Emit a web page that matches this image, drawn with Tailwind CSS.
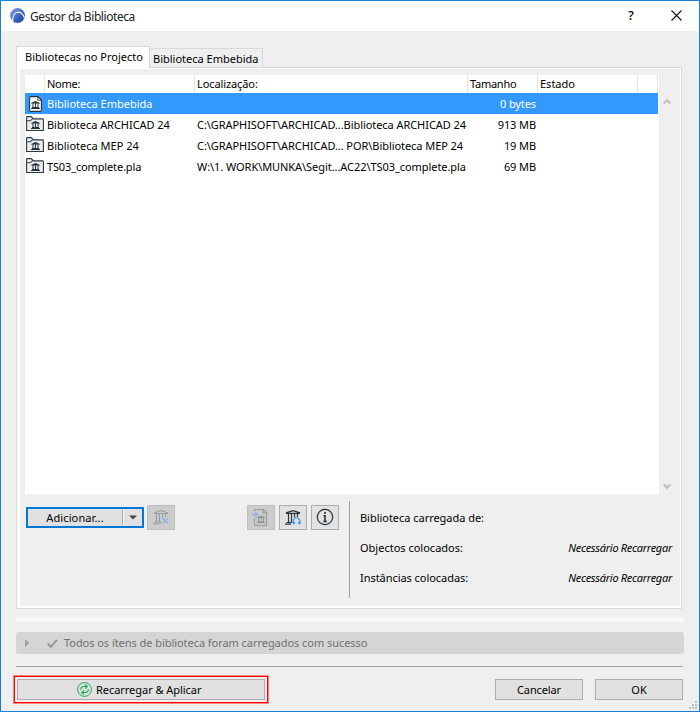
<!DOCTYPE html>
<html lang="pt">
<head>
<meta charset="utf-8">
<title>Gestor da Biblioteca</title>
<script src="https://cdn.jsdelivr.net/npm/@tailwindcss/browser@4"></script>
</head>
<body class="overflow-hidden">
<svg class="hidden">
  <symbol id="temple" viewBox="0 0 9 8"><path d="M0 2.600V2L4.500 0 9 2v.6zM1 6h7v1H1zM0 7h9v1H0zM1.500 2.500h1V6h-1zM4 2.500h1V6H4zM6.500 2.500h1V6h-1z" fill="currentColor"/></symbol>
  <symbol id="folder" viewBox="0 0 18 16"><path d="M.6 14.500V1.500Q.6.6 1.500.6h3.700l2.300 2.300h9q.9 0 .9.9v10.700zM.6 4.800h3.600l2.300-1.900" fill="#ececee" stroke="#2c3a42" stroke-width="1.100"/><use href="#temple" x="5" y="5" width="9" height="8" color="#26343c"/></symbol>
</svg>
<div class="w-[700px] h-[712px] border border-[#1a80d5] bg-[#efefef] flex flex-col font-['Noto_Sans','Open_Sans',sans-serif] text-[11px] leading-[15px] text-black whitespace-nowrap relative">
  <header class="h-[30px] shrink-0 bg-white flex items-center pl-[9px]">
    <svg class="w-[15px] h-[15px] -mt-px" viewBox="0 0 15 15"><defs><linearGradient id="lg" x1="0" y1="0" x2="1" y2="1"><stop stop-color="#8ea6e0"/><stop offset=".6" stop-color="#3560be"/><stop offset="1" stop-color="#20479f"/></linearGradient></defs><circle cx="7.500" cy="7.500" r="7.400" fill="url(#lg)"/><path d="M2.600 13.300C2.600 8 5 4.300 8.600 4.200c2.400 0 4.200 2 5.700 5.400" fill="none" stroke="#f0f4fd" stroke-width="1.300"/></svg>
    <span class="ml-[5px] text-[12px] tracking-[-0.43px] text-[#222]">Gestor da Biblioteca</span>
    <span class="ml-auto w-[10px] text-center text-[13px] mr-[35px] font-medium -mt-[2px]">?</span>
    <svg class="w-[11px] h-[11px] mr-[17px] -mt-[2px]" viewBox="0 0 11 11"><path d="M.5.5l10 10M10.500.5l-10 10" stroke="#111" stroke-width="1.100"/></svg>
  </header>

  <nav class="flex items-end ml-[15px] mt-[15px] h-[21px] shrink-0">
    <div class="w-[134px] h-[22px] -mb-px relative z-10 bg-white border border-b-0 border-[#d9d9d9] pl-[8px] pt-[2px]"><span class="tracking-[0.01px]">Bibliotecas no Projecto</span></div>
    <div class="w-[113px] h-[19px] border border-l-0 border-b-0 border-[#d9d9d9] pl-[3px] pt-[2px]"><span class="tracking-[0px]">Biblioteca Embebida</span></div>
  </nav>
  <main class="ml-[15px] w-[666px] h-[542px] shrink-0 border border-[#d9d9d9] bg-white pt-px pl-[3px] pr-px pb-[2px]">
    <div class="bg-[#efefef] w-full h-full pl-[5px] pt-[6px] flex flex-col">
      <div class="flex h-[419px] shrink-0">
        <section class="w-[634px] bg-white">
          <div class="h-[18px] flex">
            <div class="w-[20px] border-r border-[#e5e5e5]"></div>
            <div class="w-[150px] border-r border-[#e5e5e5] pl-[2px] pt-px"><span class="tracking-[-0.25px]">Nome:</span></div>
            <div class="w-[273px] border-r border-[#e5e5e5] pl-[2px] pt-px"><span class="tracking-[-0.1px]">Localização:</span></div>
            <div class="w-[70px] border-r border-[#e5e5e5] pl-[2px] pt-px"><span class="tracking-[-0.25px]">Tamanho</span></div>
            <div class="w-[100px] border-r border-[#e5e5e5] pl-[2px] pt-px"><span class="tracking-[0px]">Estado</span></div>
            <div class="w-[20px] border-r border-[#e5e5e5]"></div>
          </div>
          <div class="w-[633px] h-[21px] bg-[#3399ff] text-white flex items-center">
            <svg class="w-[13px] h-[16px] ml-[4px] mr-[5px]" viewBox="0 0 13 16"><path d="M.6 1.500Q.6.6 1.500.6H9l3.400 3.400v10.500q0 .9-.9.900h-10q-.9 0-.9-.9z" fill="white" stroke="#26343c" stroke-width="1.100"/><path d="M8.800.8v3.500h3.500" fill="none" stroke="#26343c" stroke-width=".8"/><use href="#temple" x="2" y="5" width="9" height="8" color="#26343c"/></svg>
            <span class="w-[392px] tracking-[0px]">Biblioteca Embebida</span><span class="w-[97px] text-right tracking-[-0.1px]">0 bytes</span>
          </div>
          <div class="h-[21px] flex items-center"><svg class="w-[18px] h-[16px] ml-px mr-[3px] -mt-px"><use href="#folder"/></svg><span class="w-[150px] tracking-[-0.04px]">Biblioteca ARCHICAD 24</span><span class="w-[270px] tracking-[-0.06px]">C:\GRAPHISOFT\ARCHICAD...Biblioteca ARCHICAD 24</span><span class="w-[69px] text-right tracking-[-0.1px]">913 MB</span></div>
          <div class="h-[21px] flex items-center"><svg class="w-[18px] h-[16px] ml-px mr-[3px] -mt-px"><use href="#folder"/></svg><span class="w-[150px] tracking-[0px]">Biblioteca MEP 24</span><span class="w-[270px] tracking-[-0.06px]">C:\GRAPHISOFT\ARCHICAD... POR\Biblioteca MEP 24</span><span class="w-[69px] text-right tracking-[-0.1px]">19 MB</span></div>
          <div class="h-[21px] flex items-center"><svg class="w-[18px] h-[16px] ml-px mr-[3px] -mt-px"><use href="#folder"/></svg><span class="w-[150px] tracking-[-0.14px]">TS03_complete.pla</span><span class="w-[270px] tracking-[-0.06px]">W:\1. WORK\MUNKA\Segit...AC22\TS03_complete.pla</span><span class="w-[69px] text-right tracking-[-0.1px]">69 MB</span></div>
        </section>
        <div class="w-[15px] flex flex-col justify-between items-center pt-[23px] pb-[4px]">
          <svg class="w-[8px] h-[7px]" viewBox="0 0 8 7"><path d="M.7 5.500L4 2.200l3.300 3.300" fill="none" stroke="#bfbfbf" stroke-width="2"/></svg>
          <svg class="w-[8px] h-[7px]" viewBox="0 0 8 7"><path d="M.7 1.500L4 4.800l3.300-3.300" fill="none" stroke="#bfbfbf" stroke-width="2"/></svg>
        </div>
      </div>
      <div class="flex mt-[7px] h-[97px]">
        <div class="flex pt-[4px] items-start">
          <div class="mt-[2px] ml-px w-[118px] h-[21px] border-2 border-[#0078d7] bg-[#e1e1e1] flex items-center">
            <span class="w-[94px] text-center tracking-[0.12px]">Adicionar...</span><i class="w-px h-[15px] bg-[#a5a5a5]"></i><i class="w-px h-[15px] bg-white"></i>
            <svg class="ml-[5px] -mt-px w-[8px] h-[5px]" viewBox="0 0 8 5"><path d="M0 .5h8L4 4.500z" fill="#444"/></svg>
          </div>
          <div class="ml-[3px] w-[28px] h-[25px] border border-[#bfbfbf] bg-[#cccccc]">
            <svg class="w-[26px] h-[23px]" viewBox="0 0 26 23"><path d="M6.500 7.500V6.800L13 4.600l6.500 2.200v.7zM8.500 8v8M11.500 8v8M14.500 8v4M17.500 8v3M6.500 16h7M5 17.700h8" fill="none" stroke="#999ea2" stroke-width="1.100"/><path d="M14.500 12l5.500 5.500M20 12L14.500 17.500" stroke="#8fb0ee" stroke-width="1.200"/></svg>
          </div>
          <div class="ml-[72px] w-[28px] h-[25px] border border-[#bfbfbf] bg-[#cccccc]">
            <svg class="w-[26px] h-[23px]" viewBox="0 0 26 23"><path d="M6.500 5.500V3.500H15.500L18.500 6.500v13H6.500V12M15 3.500v3.500H18.500" fill="none" stroke="#999ea2" stroke-width="1.200"/><use href="#temple" x="8.500" y="9.500" width="9" height="8" color="#8f9498"/><path d="M4 8.500h5M7 6l2.500 2.500L7 11" fill="none" stroke="#8fb0ee" stroke-width="1.300"/></svg>
          </div>
          <div class="ml-[4px] w-[28px] h-[25px] border border-[#adadad] bg-[#e1e1e1]">
            <svg class="w-[26px] h-[23px]" viewBox="0 0 26 23"><path d="M6.500 7.300V6.600L13 4.600l6.500 2v.7zM8.500 8v8.500M11.500 8v8.500M14.500 8v3.500M17.500 8v3M6.500 16.500h5M5 18.200h6" fill="none" stroke="#26343c" stroke-width="1.200"/><path d="M13.700 16.500a3.200 3.200 0 1 1 5.600 0M12.300 16l1.300 1.600 1.600-1.100M20.800 16l-1.300 1.600-1.600-1.100" fill="none" stroke="#438cf5" stroke-width="1.200"/></svg>
          </div>
          <div class="ml-[4px] w-[28px] h-[25px] border border-[#adadad] bg-[#e1e1e1]">
            <svg class="w-[26px] h-[23px]" viewBox="0 0 26 23"><circle cx="13" cy="11" r="7.700" fill="none" stroke="#26343c" stroke-width="1.200"/><path d="M13 6v2M11.500 9.700h1.500v5.500M11.300 15.500h3.500" fill="none" stroke="#26343c" stroke-width="1.600"/></svg>
          </div>
        </div>
        <div class="ml-[10px] w-px bg-[#a0a0a0]"></div>
        <div class="ml-[10px] w-[312px] pt-[9px] flex flex-col gap-[15px]">
          <div><span class="tracking-[-0.03px]">Biblioteca carregada de:</span></div>
          <div class="flex justify-between"><span class="tracking-[0px]">Objectos colocados:</span><i class="tracking-[-0.29px]">Necessário Recarregar</i></div>
          <div class="flex justify-between"><span class="tracking-[-0.05px]">Instâncias colocadas:</span><i class="tracking-[-0.29px]">Necessário Recarregar</i></div>
        </div>
      </div>
    </div>
  </main>

  <div class="ml-[15px] mt-[8px] w-[668px] h-[5px] shrink-0 bg-[#f7f7f7]"></div>
  <div class="ml-[15px] mt-[10px] w-[668px] h-[22px] shrink-0 bg-[#d5d5d5] rounded-[3px] flex items-center text-[#707070]">
    <svg class="ml-[9px] -mt-px w-[5px] h-[8px]" viewBox="0 0 5 8"><path d="M0 0l4.500 4L0 8z" fill="#a0a0a0"/></svg>
    <svg class="ml-[17px] w-[11px] h-[9px]" viewBox="0 0 11 9"><path d="M.8 4.800l3 3L10 .8" fill="none" stroke="#969696" stroke-width="2"/></svg>
    <span class="ml-[6px] -mt-[2px] tracking-[-0.05px]">Todos os ítens de biblioteca foram carregados com sucesso</span>
  </div>
  <hr class="ml-[15px] mt-[12px] w-[667px] h-px border-0 bg-[#a0a0a0] shrink-0">
  <footer class="flex mt-[8px] ml-[12px] items-center">
    <div class="w-[256px] h-[29px] border border-[#ff8080] flex">
      <div class="w-[254px] h-[27px] border border-[#ff0000] p-[2px] pl-[2px] flex items-center">
        <div class="w-[249px] h-[21px] border border-[#adadad] bg-[#e1e1e1] flex items-center pl-[59px]">
          <svg class="w-[15px] h-[15px]" viewBox="0 0 15 15" fill="none" stroke="#17ac55"><circle cx="7.500" cy="7.500" r="6.900"/><path d="M3.700 7.800C3.700 5.200 5 4.500 7 4.500h3.200M8 2.300l2.300 2.200L8 6.700M11.300 7.200c0 2.600-1.300 3.300-3.300 3.300H4.800M7 8.300l-2.300 2.200L7 12.700" stroke-width="1.150"/></svg>
          <span class="ml-[4px] tracking-[-0.04px]">Recarregar &amp; Aplicar</span>
        </div>
      </div>
    </div>
    <div class="ml-[226px] w-[88px] h-[21px] border border-[#adadad] bg-[#e1e1e1] flex items-center justify-center"><span class="tracking-[-0.12px]">Cancelar</span></div>
    <div class="ml-[12px] w-[88px] h-[21px] border border-[#adadad] bg-[#e1e1e1] flex items-center justify-center"><span>OK</span></div>
  </footer>
  <svg class="absolute right-[2px] bottom-[2px] w-[8px] h-[8px]" viewBox="0 0 8 8" fill="#bfbfbf"><path d="M6 0h2v2H6zM3 3h2v2H3zM6 3h2v2H6zM0 6h2v2H0zM3 6h2v2H3zM6 6h2v2H6z"/></svg>
</div>
</body>
</html>
